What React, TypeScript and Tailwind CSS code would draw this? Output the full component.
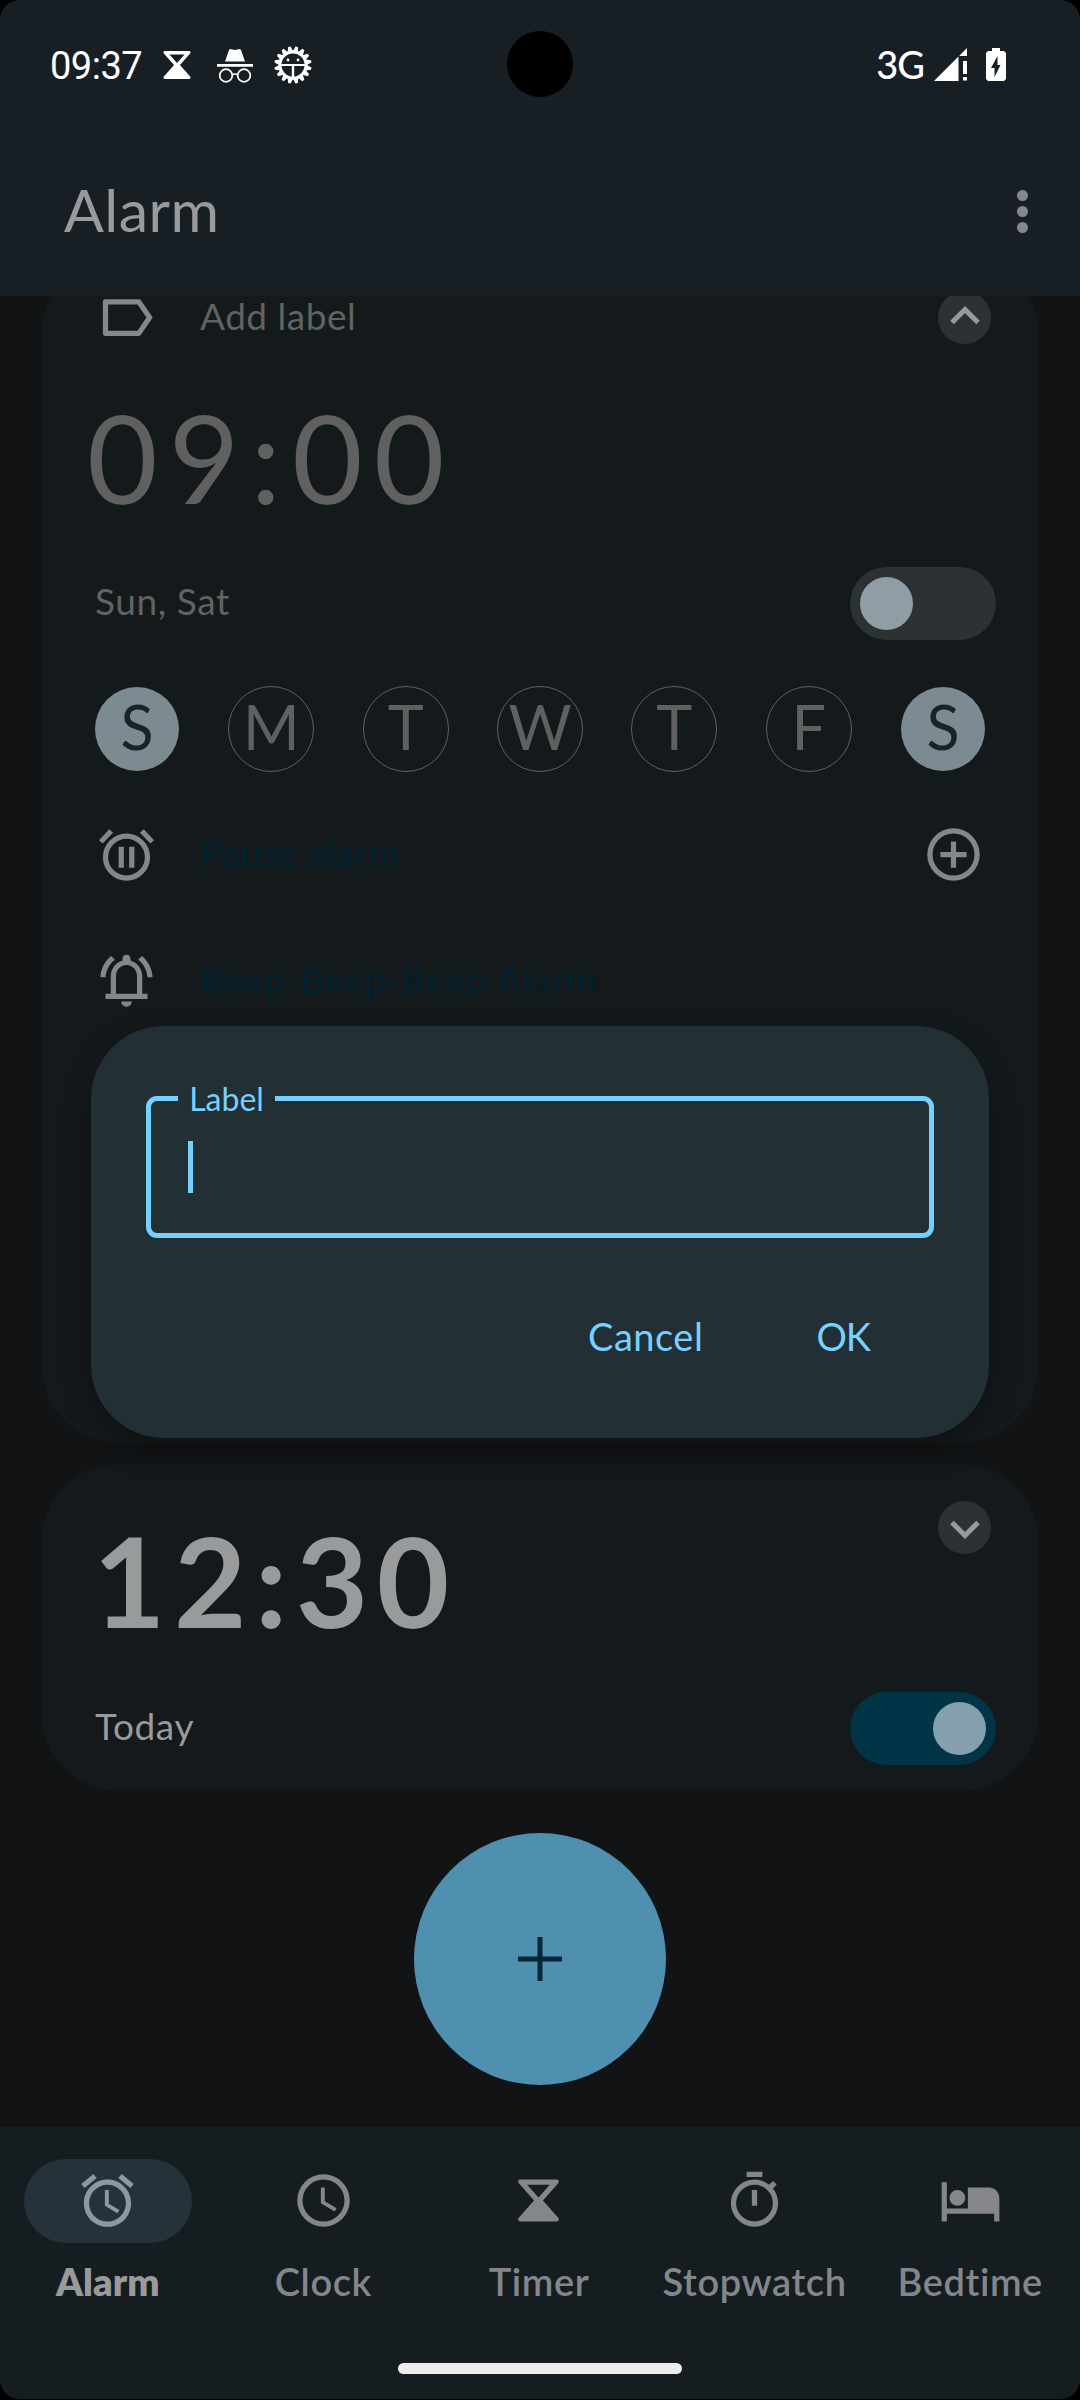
import React from 'react';

type IconProps = { className?: string };

function Glyph({ d, className = '' }: { d: string; className?: string }) {
  return (
    <svg viewBox="0 0 24 24" className={`size-[63px] shrink-0 ${className}`} fill="currentColor" fillRule="evenodd">
      <path d={d} />
    </svg>
  );
}

const ICONS = {
  label:
    'M4 5h12.7q.5 0 .8.4L22 12l-4.5 6.6q-.3.4-.8.4H4a1 1 0 0 1-1-1V6a1 1 0 0 1 1-1zM5 7v10h11.2l3.4-5-3.4-5z',
  pause:
    'M1.5 6.6 5.4 2.4l1.5 1.3-4 4.1zM22.5 6.6l-3.9-4.2-1.5 1.3 4 4.1zM12 4a9 9 0 1 0 0 18 9 9 0 0 0 0-18zm0 2a7 7 0 1 1 0 14 7 7 0 0 1 0-14zM9 9h2v8H9zM13 9h2v8h-2z',
  bell:
    'M7.58 4.08 6.15 2.65C3.75 4.48 2.17 7.6 2.03 10.8h2c.15-2.65 1.51-5.27 3.55-6.72zM19.97 10.8h2c-.15-3.2-1.73-6.32-4.12-8.15l-1.42 1.43c2.02 1.45 3.39 4.07 3.54 6.72zM12 22c1.1 0 2-.9 2-2h-4c0 1.1.9 2 2 2zM4 19v-2h2v-6.600C6 7.500 7.900 5.100 10.500 4.400V3.700a1.500 1.500 0 0 1 3 0v.7C16.100 5.100 18 7.500 18 10.400V17h2v2zM8 17h8v-6.600C16 8 14.300 6.100 12 6.100S8 8 8 10.400z',
  add: 'M12 2a10 10 0 1 0 0 20 10 10 0 0 0 0-20zm0 2a8 8 0 1 1 0 16 8 8 0 0 1 0-16zM11 7h2v4h4v2h-4v4h-2v-4H7v-2h4z',
  alarm:
    'M22 5.72l-4.6-3.86-1.29 1.53 4.6 3.86L22 5.72zM7.88 3.39L6.6 1.86 2 5.71l1.29 1.53 4.59-3.85zM12.5 8H11v6l4.750 2.850.75-1.230-4-2.370V8zM12 4c-4.970 0-9 4.030-9 9s4.020 9 9 9c4.970 0 9-4.030 9-9s-4.030-9-9-9zm0 16c-3.870 0-7-3.130-7-7s3.130-7 7-7 7 3.130 7 7-3.130 7-7 7z',
  clock:
    'M12 2a10 10 0 1 0 0 20 10 10 0 0 0 0-20zm0 2a8 8 0 1 1 0 16 8 8 0 0 1 0-16zM12.5 7H11v6l5.250 3.150.75-1.230-4.500-2.670z',
  timer:
    'M5.100 4h13.800c.8 0 1.100.8.600 1.400L13.700 12l5.800 6.600c.5.6.2 1.400-.6 1.400H5.100c-.8 0-1.100-.8-.6-1.400L10.300 12 4.500 5.400C4 4.800 4.300 4 5.100 4zM7.700 6 12 10.900 16.300 6z',
  stopwatch:
    'M9 1h6v2H9zM11 8h2v6h-2zM12 4a9 9 0 1 0 9 9c0-2.120-.74-4.070-1.970-5.610l1.420-1.420c-.43-.51-.9-.99-1.410-1.410l-1.420 1.420A8.960 8.960 0 0 0 12 4zm0 2a7 7 0 1 1 0 14 7 7 0 0 1 0-14z',
  bed: 'M7 14a3 3 0 1 0 0-6 3 3 0 0 0 0 6zM19 7h-8v8H3V5H1v15h2v-3h18v3h2v-9c0-2.210-1.790-4-4-4z',
};

function Incognito({ className = '' }: IconProps) {
  return (
    <svg viewBox="0 0 36 34" className={`h-[34px] w-[36px] ${className}`} fill="currentColor">
      <path d="M12 1q.7-1.300 2.200-.8L18 1l3.800-.8q1.500-.5 2.200.8L28 12.500H8zM0 15h36v2.800H0z" />
      <g fill="none" stroke="currentColor" strokeWidth="1.700">
        <circle cx="9" cy="26.500" r="6.300" />
        <circle cx="27" cy="26.500" r="6.300" />
        <path d="M15 26q3-2 6 0" />
      </g>
    </svg>
  );
}

function GearFace({ className = '' }: IconProps) {
  const teeth = Array.from({ length: 16 }, (_, i) => i * 22.5 + 11.25);
  return (
    <svg viewBox="-19 -19 38 38" className={`size-[38px] ${className}`} fill="currentColor">
      {teeth.map((a) => (
        <path key={a} d="M-2.800-13.500-1.200-18.600h2.400L2.800-13.500z" transform={`rotate(${a})`} />
      ))}
      <circle r="13" fill="none" stroke="currentColor" strokeWidth="3" />
      <path d="M-12-1h24v2h-24zM-1.200 0h2.400v14h-2.400z" />
      <circle cx="-5" cy="-5" r="1.400" />
      <circle cx="5" cy="-5" r="1.400" />
    </svg>
  );
}

function StatusBar() {
  return (
    <div className="flex h-[128px] items-start justify-between pt-[46px] pr-[74px] pl-[50px] text-white">
      <div className="flex h-[38px] items-center">
        <span className="w-[107px] pt-px font-[Roboto] text-[38px] leading-[38px] tracking-[-0.5px]">09:37</span>
        <svg viewBox="4 4 16 16" className="mr-[25px] ml-[6px] size-[28px]" fill="currentColor" fillRule="evenodd">
          <path d={ICONS.timer} />
        </svg>
        <Incognito className="mt-[2px] mr-[21px] ml-[1px]" />
        <GearFace />
      </div>
      <div className="flex h-[36px] items-center">
        <span className="mr-[10px] text-[38px] leading-[38px] font-medium tracking-[-1px]">3G</span>
        <svg viewBox="0 0 33 33" className="h-[33px] w-[33px]" fill="currentColor">
          <path d="M0 33 24.500 8.500V33zM25.500 7.500 33 0v8h-7.500zM29 13h4v13h-4zM29 29h4v3.500h-4z" />
        </svg>
        <svg viewBox="0 0 20 33" className="ml-[19px] h-[33px] w-[20px]" fill="currentColor" fillRule="evenodd">
          <path d="M6 0h8v3h4l2 2v26l-2 2H2l-2-2V5l2-2h4zM11.500 8 5 20h3.500v9L14.500 17h-3z" />
        </svg>
      </div>
    </div>
  );
}

function Chevron({ up = false }: { up?: boolean }) {
  return (
    <div className="mr-[5px] flex size-[53px] shrink-0 items-center justify-center rounded-full bg-[#2c3133]">
      <svg viewBox="0 0 30 20" className={`h-[20px] w-[30px] ${up ? 'mb-[5px] rotate-180' : 'mt-[5px]'}`} fill="none" stroke="#999a9b" strokeWidth="5">
        <path d="M2 2.500 15 15.500 28 2.500" />
      </svg>
    </div>
  );
}

function Toggle({ on = false }: { on?: boolean }) {
  return (
    <div
      className={`flex h-[73px] w-[146px] items-center rounded-full px-[10px] ${
        on ? 'justify-end bg-[#003547]' : 'bg-[#2c3133]'
      }`}
    >
      <div className={`size-[53px] rounded-full ${on ? 'bg-[#849fad]' : 'bg-[#8f9da5]'}`} />
    </div>
  );
}

const DAYS = [
  { name: 'S', on: true },
  { name: 'M', on: false },
  { name: 'T', on: false },
  { name: 'W', on: false },
  { name: 'T', on: false },
  { name: 'F', on: false },
  { name: 'S', on: true },
];

function ExpandedCard() {
  return (
    <section className="mx-[42px] -mt-[41px] flex h-[1188px] shrink-0 flex-col rounded-[76px] bg-[#14191b] pr-[42px] pl-[53px] text-[37px]">
      <div className="mt-[31px] flex h-[63px] items-center">
        <Glyph d={ICONS.label} className="text-[#84878b]" />
        <span className="mt-px mb-[4px] ml-[42px] grow leading-[36px] tracking-[0.5px] text-[#616262]">Add label</span>
        <Chevron up />
      </div>
      <div className="mt-[35px] -ml-[8px] h-[146px] text-[122px] leading-[146px] tracking-[11px] text-[#606060]">09:00</div>
      <div className="mt-[37px] flex h-[73px] items-center justify-between">
        <span className="pb-[6px] tracking-[0.6px] text-[#616262]">Sun, Sat</span>
        <Toggle />
      </div>
      <div className="mt-[46px] -ml-px flex h-[86px] w-[892px] justify-between">
        {DAYS.map((d, i) => (
          <div
            key={i}
            className={`flex items-center justify-center rounded-full pb-[4px] text-[61px] ${
              d.on ? 'm-px size-[84px] bg-[#7c8a92] text-[#16252a]' : 'size-[86px] border border-[#5f6062] text-[#606060]'
            }`}
          >
            {d.name}
          </div>
        ))}
      </div>
      <div className="mt-[51px] flex h-[63px] items-center">
        <Glyph d={ICONS.pause} className="text-[#84868a]" />
        <span className="ml-[42px] grow pb-[4px] tracking-[0.4px] text-[#00202f]">Pause alarm</span>
        <Glyph d={ICONS.add} className="mr-[11px] text-[#84868a]" />
      </div>
      <div className="mt-[63px] flex h-[63px] items-center">
        <Glyph d={ICONS.bell} className="text-[#84868a]" />
        <span className="ml-[42px] grow pb-[4px] tracking-[0.7px] text-[#00202f]">Beep-Beep-Beep Alarm</span>
      </div>
    </section>
  );
}

function CollapsedCard() {
  return (
    <section className="mx-[42px] mt-[21px] flex h-[327px] shrink-0 flex-col rounded-[76px] bg-[#14191b] pr-[42px] pl-[53px] text-[37px] text-[#999a9c]">
      <div className="mt-[37px] flex items-start justify-between">
        <span className="mt-[4px] -ml-[2px] h-[150px] text-[125px] leading-[150px] font-bold tracking-[8.5px]">12:30</span>
        <Chevron />
      </div>
      <div className="mt-[37px] flex h-[73px] items-center justify-between">
        <span className="pb-[5px] tracking-[0.6px]">Today</span>
        <Toggle on />
      </div>
    </section>
  );
}

function LabelDialog() {
  return (
    <div className="absolute top-[1026px] left-[91px] flex h-[412px] w-[898px] flex-col rounded-[73px] bg-[#222f34] px-[55px] pt-[70px] text-[#77d1ff] shadow-[0_12px_30px_rgba(0,0,0,0.3)]">
      <div className="relative h-[142px] rounded-[11px] border-[5px] border-[#77d1ff] pt-[40px] pl-[37px]">
        <span className="absolute -top-[20px] left-[27px] flex h-[36px] w-[97px] items-center justify-center bg-[#222f34] text-[32px] leading-[36px]">
          Label
        </span>
        <div className="h-[52px] w-[5px] bg-[#77d1ff]" />
      </div>
      <div className="mt-[62px] flex h-[72px] items-center justify-end gap-[113px] pr-[64px] text-[38px]">
        <span className="tracking-[0.5px]">Cancel</span>
        <span className="tracking-[-1px]">OK</span>
      </div>
    </div>
  );
}

const TABS = [
  { name: 'Alarm', icon: ICONS.alarm },
  { name: 'Clock', icon: ICONS.clock },
  { name: 'Timer', icon: ICONS.timer },
  { name: 'Stopwatch', icon: ICONS.stopwatch },
  { name: 'Bedtime', icon: ICONS.bed },
];

function BottomNav() {
  return (
    <nav className="flex h-[272px] flex-col items-center bg-[#161d20] pt-[32px]">
      <div className="grid w-full grid-cols-5 pr-[2px]">
        {TABS.map((t, i) => (
          <div key={t.name} className="flex flex-col items-center">
            <div
              className={`flex h-[84px] w-[168px] items-center justify-center rounded-full pb-px ${
                i === 0 ? 'bg-[#25323a] text-[#8a9aa4]' : 'text-[#84868b]'
              }`}
            >
              <Glyph d={t.icon} />
            </div>
            <span
              className={`mt-[16px] text-[38px] leading-[44px] ${
                i === 0 ? 'font-extrabold text-[#999a9c]' : 'font-semibold tracking-[0.6px] text-[#84868b]'
              }`}
            >
              {t.name}
            </span>
          </div>
        ))}
      </div>
      <div className="mt-[60px] h-[11px] w-[284px] rounded-full bg-[#ececec]" />
    </nav>
  );
}

export default function App() {
  return (
    <div className="h-[2400px] w-[1080px] bg-black font-[Lato,sans-serif]">
      <div className="relative flex h-[2399px] w-[1080px] flex-col overflow-hidden rounded-[20px] bg-[#121315]">
        <header className="h-[296px] shrink-0 bg-[#171e24]">
          <StatusBar />
          <div className="flex h-[168px] items-start justify-between pt-[48px] pr-[52px] pl-[64px]">
            <h1 className="text-[59px] leading-[68px] tracking-[0.5px] text-[#999a9c]">Alarm</h1>
            <div className="mt-[14px] flex flex-col gap-[5px]">
              <div className="size-[11px] rounded-full bg-[#84868b]" />
              <div className="size-[11px] rounded-full bg-[#84868b]" />
              <div className="size-[11px] rounded-full bg-[#84868b]" />
            </div>
          </div>
        </header>
        <main className="flex min-h-0 grow flex-col overflow-hidden">
          <ExpandedCard />
          <CollapsedCard />
          <button className="mt-[42px] flex size-[252px] shrink-0 items-center justify-center self-center rounded-full bg-[#4f8fb0]">
            <svg viewBox="0 0 44 44" className="size-[44px]" fill="#062635">
              <path d="M19.500 0h5v19.500H44v5H24.500V44h-5V24.500H0v-5h19.500z" />
            </svg>
          </button>
        </main>
        <BottomNav />
        <div className="absolute top-[31px] left-[507px] size-[66px] rounded-full bg-black" />
        <LabelDialog />
      </div>
    </div>
  );
}
